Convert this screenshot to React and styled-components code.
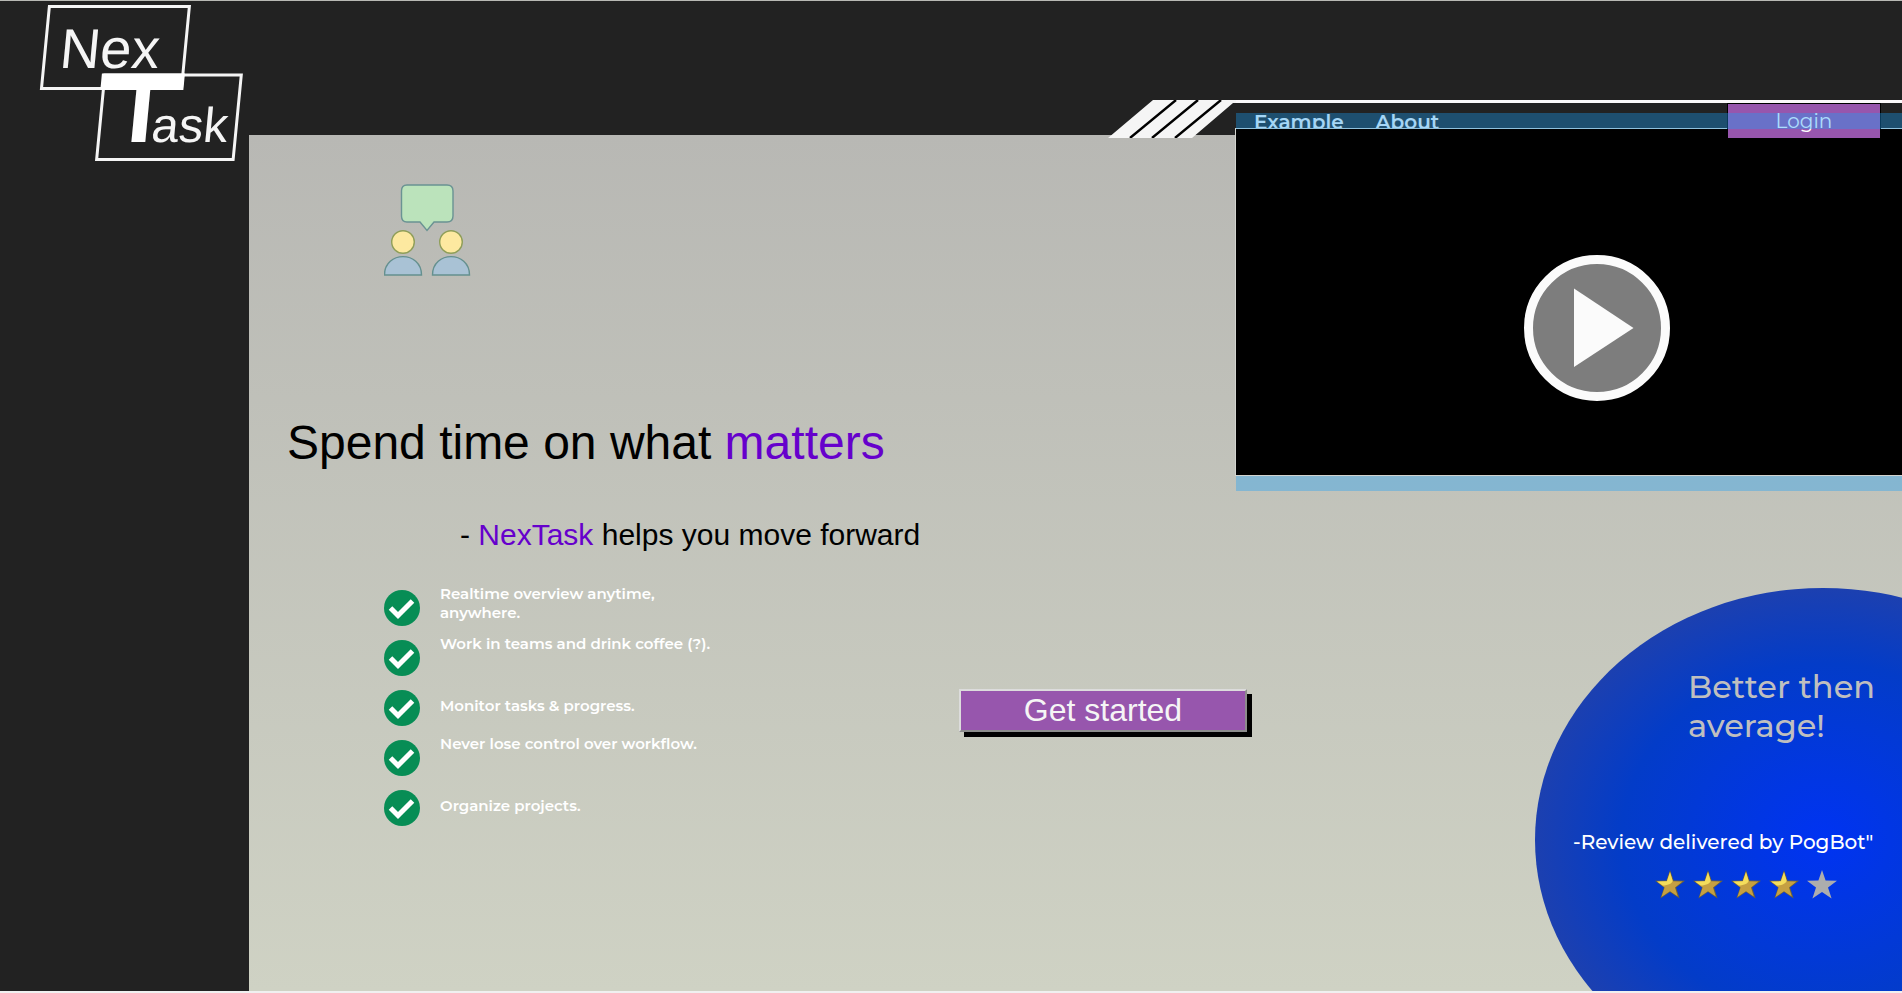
import React from "react";
import styled, { createGlobalStyle } from "styled-components";

const GlobalStyle = createGlobalStyle`
  *, *::before, *::after { box-sizing: border-box; }
  body { margin: 0; background: #f0f0f0; }
  h1, h2, p, ul, blockquote, figure { margin: 0; padding: 0; font-weight: 400; }
  ul { list-style: none; }
`;

const arial = `"Liberation Sans", Arial, sans-serif`;
const rounded = `Montserrat, Inter, sans-serif`;
const columns = `minmax(0, 987fr) minmax(0, 666fr)`;

const Page = styled.div`
  display: flex;
  min-height: 100vh;
  overflow: hidden;
  background: #222;
  border-top: 1px solid #b8b9b4;
  border-bottom: 2px solid #f0f0f0;
  font-family: ${arial};
`;

const Sidebar = styled.aside`
  flex: 0 0 249px;
`;

const LogoLink = styled.a`
  display: block;
  color: #f5f5f5;
`;

const LogoArt = styled.svg`
  display: block;
  font-family: ${arial};
`;

const Main = styled.main`
  flex: 1;
  min-width: 0;
  display: flex;
  flex-direction: column;
`;

const Header = styled.header`
  display: grid;
  grid-template-columns: ${columns};
  height: 134px;
  padding-top: 99px;
`;

const Stripes = styled.svg`
  display: block;
  justify-self: end;
  position: relative;
  z-index: 1;
`;

const NavBar = styled.nav`
  display: flex;
  align-items: flex-start;
  border-top: 3px solid #fbf9fa;
  padding-left: 18px;
  padding-right: 21px;
  font-family: ${rounded};
  font-size: 20px;
  line-height: 24px;
`;

const NavLink = styled.a`
  margin-top: 7px;
  margin-right: 32px;
  color: #f5f5f5;
  font-weight: 600;
  text-decoration: none;
`;

const LoginButton = styled.button`
  position: relative;
  z-index: 3;
  flex: none;
  width: 154px;
  height: 35px;
  margin-left: auto;
  padding: 0;
  border: 1px solid #000;
  border-bottom: 0;
  background: #9756ad;
  color: #fff;
  font: 400 20px/24px ${rounded};
`;

const Content = styled.div`
  flex: 1;
  display: grid;
  grid-template-columns: ${columns};
  background: linear-gradient(#b8b8b4, #cfd2c4);
`;

const Hero = styled.section`
  padding-top: 49px;
`;

const ChatArt = styled.svg`
  display: block;
  margin-left: 135px;
`;

const Title = styled.h1`
  margin: 139px 0 0 38px;
  font-size: 48px;
  line-height: 56px;
  color: #000;
`;

const Subtitle = styled.h2`
  margin: 46px 0 0 211px;
  font-size: 30px;
  line-height: 36px;
  color: #000;
`;

const Accent = styled.span`
  color: #60c;
`;

const Offer = styled.div`
  display: flex;
  align-items: center;
  justify-content: space-between;
  margin: 30px -11px 0 135px;
`;

const Feature = styled.li`
  display: flex;
  align-items: center;
  gap: 20px;
  height: 50px;
`;

const FeatureText = styled.p`
  align-self: ${(p) => (p.$raised ? "flex-start" : "center")};
  width: 288px;
  padding: ${(p) => (p.$raised ? "1px 0 0" : "0 0 6px")};
  font: 600 15px/19px ${rounded};
  color: #fff;
`;

const StartButton = styled.button`
  flex: none;
  width: 288px;
  height: 43px;
  margin-top: 4px;
  padding: 0;
  border: 2px solid;
  border-color: #dcdcdc #8c8c8c #8c8c8c #dcdcdc;
  background: #9756ad;
  box-shadow: 5px 5px 0 #000;
  color: #f5f5f5;
  font: 400 32px/36px ${arial};
`;

const Aside = styled.section`
  display: flex;
  flex-direction: column;
`;

const VideoCard = styled.figure`
  margin-top: -22px;
`;

const Tint = styled.div`
  position: relative;
  z-index: 4;
  height: ${(p) => p.$height}px;
  background: rgba(26, 162, 250, 0.36);
  pointer-events: none;
`;

const Video = styled.button`
  position: relative;
  z-index: 2;
  display: flex;
  align-items: center;
  justify-content: center;
  width: 100%;
  height: 346px;
  margin-bottom: 1px;
  padding: 52px 0 0 55px;
  border: 0;
  background: #000;
  box-shadow: 0 0 0 1px #d2d3ce;
`;

const ReviewArea = styled.div`
  flex: 1 0 403px;
  height: 403px;
  margin-top: 97px;
  padding-left: 299px;
  overflow: hidden;
`;

const ReviewBubble = styled.blockquote`
  width: 576px;
  height: 504px;
  padding-top: 79px;
  border-radius: 50%;
  background: radial-gradient(closest-side, #0033f2, #033cc8 70%, #1c40b0);
  font-family: ${rounded};
`;

const Quote = styled.p`
  width: 200px;
  margin-left: 153px;
  font-size: 32px;
  line-height: 39px;
  font-weight: 500;
  color: #bfbfbf;
`;

const Reviewer = styled.p`
  margin: 85px 0 0 38px;
  font-size: 20px;
  line-height: 24px;
  font-weight: 500;
  color: #fff;
`;

const Stars = styled.div`
  display: flex;
  gap: 8px;
  margin: 16px 0 0 120px;
`;

const starPath =
  "M15 0 L18.6 10.6 L30 10.8 L21 17.6 L24.6 28.6 L15 22 L5.4 28.6 L9 17.6 L0 10.8 L11.4 10.6 Z";

function Star({ filled }) {
  return (
    <svg width="30" height="29" viewBox="0 0 30 29" aria-hidden="true">
      {filled ? (
        <>
          <path d={starPath} fill="#6f6438" />
          <path d="M15 2 L17.800 11.2 L27.500 11.6 L20 17.4 L22.800 26.6 L15 21.2 L6.4 27 L9.6 17.4 L2 11.5 L11.9 11.2 Z" fill="#c5a042" />
          <path d="M15 2 L17.600 10.5 C18 13 13 15.5 7.8 15.6 L2 11.5 L11.9 11.2 Z" fill="#f4dd5c" />
        </>
      ) : (
        <path d={starPath} fill="#adadad" />
      )}
    </svg>
  );
}

function Logo() {
  return (
    <LogoArt width="249" height="162" viewBox="0 1 249 162" role="img" aria-label="NexTask">
      <g transform="skewX(-5.5)" fill="#f5f5f5">
        <rect x="50" y="6.5" width="140" height="82" fill="none" stroke="#f5f5f5" strokeWidth="3" />
        <rect x="112" y="75" width="136.5" height="84.5" fill="none" stroke="#f5f5f5" strokeWidth="3" />
        <rect x="109" y="73.5" width="83" height="16.5" fill="#fff" />
        <text x="65" y="68" fontSize="56">Nex</text>
        <text x="152" y="142" fontSize="96" fontWeight="700" textAnchor="middle" fill="#fff">T</text>
        <text x="164" y="142" fontSize="49">ask</text>
      </g>
    </LogoArt>
  );
}

function Check() {
  return (
    <svg width="36" height="36" viewBox="0 0 36 36" aria-hidden="true">
      <circle cx="18" cy="18" r="18" fill="#078d55" />
      <path d="M6.5 18 L14 25.5 L28.5 11" fill="none" stroke="#fff" strokeWidth="5" />
    </svg>
  );
}

function ChatPeople() {
  return (
    <ChatArt width="87" height="92" viewBox="0 0 87 92" aria-hidden="true">
      <path
        d="M23 1 H63 Q69 1 69 7 V32 Q69 38 63 38 H50 L43 46.5 L36 38 H23 Q17.5 38 17.5 32 V7 Q17.5 1 23 1 Z"
        fill="#bbe3bb" stroke="#6a9393" strokeWidth="1.4"
      />
      {[19, 67].map((x) => (
        <g key={x} strokeWidth="1.4">
          <circle cx={x} cy="58" r="11.3" fill="#fde9a0" stroke="#8f9e59" />
          <path d={`M${x - 18.5} 91 C${x - 18.5} 66.5 ${x + 18.5} 66.5 ${x + 18.5} 91 Z`} fill="#a9c2d5" stroke="#64908f" />
        </g>
      ))}
    </ChatArt>
  );
}

const features = [
  { text: "Realtime overview anytime, anywhere.", raised: true },
  { text: "Work in teams and drink coffee (?).", raised: true },
  { text: "Monitor tasks & progress." },
  { text: "Never lose control over workflow.", raised: true },
  { text: "Organize projects." },
];

export default function App() {
  return (
    <>
      <GlobalStyle />
      <Page>
        <Sidebar>
          <LogoLink href="#home">
            <Logo />
          </LogoLink>
        </Sidebar>
        <Main>
          <Header>
            <Stripes width="128" height="38" viewBox="0 0 128 38" aria-hidden="true">
              <path d="M45 0 H128 V3 H125 L84 38 H0 Z" fill="#f5f5f5" />
              <path d="M68 0 L22 38 M90 0 L44 38 M113 0 L67 38" stroke="#000" strokeWidth="2.4" />
            </Stripes>
            <NavBar>
              <NavLink href="#example">Example</NavLink>
              <NavLink href="#about">About</NavLink>
              <LoginButton type="button">Login</LoginButton>
            </NavBar>
          </Header>
          <Content>
            <Hero>
              <ChatPeople />
              <Title>
                Spend time on what <Accent>matters</Accent>
              </Title>
              <Subtitle>
                - <Accent>NexTask</Accent> helps you move forward
              </Subtitle>
              <Offer>
                <ul>
                  {features.map((f) => (
                    <Feature key={f.text}>
                      <Check />
                      <FeatureText $raised={f.raised}>{f.text}</FeatureText>
                    </Feature>
                  ))}
                </ul>
                <StartButton type="button">Get started</StartButton>
              </Offer>
            </Hero>
            <Aside>
              <VideoCard>
                <Tint $height={16} />
                <Video type="button" aria-label="Play video">
                  <svg width="146" height="146" viewBox="0 0 146 146" aria-hidden="true">
                    <circle cx="73" cy="73" r="68.5" fill="#7d7d7d" stroke="#fbfbfb" strokeWidth="9" />
                    <path d="M50 33.5 L109.5 73 L50 112 Z" fill="#fbfbfb" />
                  </svg>
                </Video>
                <Tint $height={15} />
              </VideoCard>
              <ReviewArea>
                <ReviewBubble>
                  <Quote>Better then average!</Quote>
                  <Reviewer>-Review delivered by PogBot"</Reviewer>
                  <Stars role="img" aria-label="4 out of 5 stars">
                    {[1, 2, 3, 4, 5].map((n) => (
                      <Star key={n} filled={n < 5} />
                    ))}
                  </Stars>
                </ReviewBubble>
              </ReviewArea>
            </Aside>
          </Content>
        </Main>
      </Page>
    </>
  );
}
